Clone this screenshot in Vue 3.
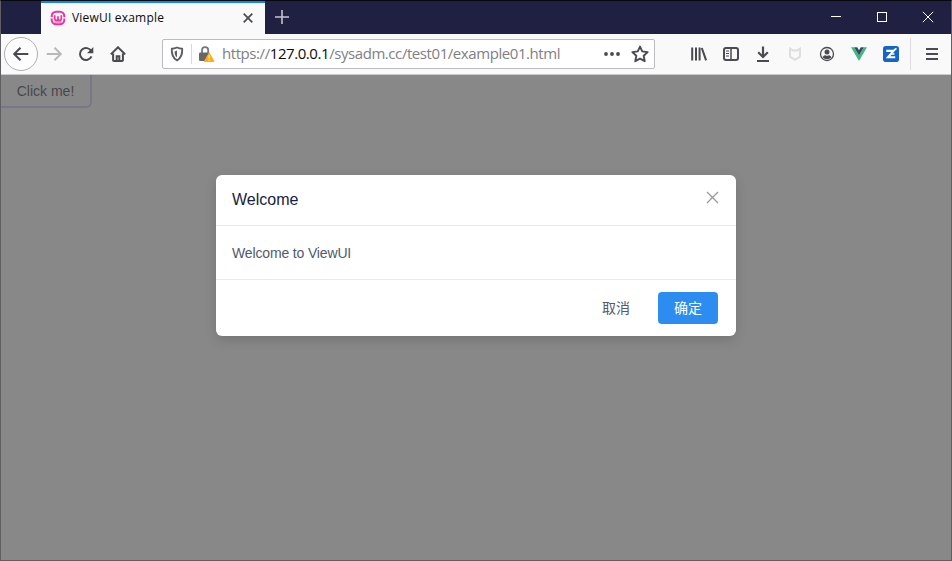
<script setup>
import { ref } from 'vue'

const open = ref(true)
const url = { scheme: 'https://', host: '127.0.0.1', path: '/sysadm.cc/test01/example01.html' }
</script>

<template>
  <div class="window">
    <header class="titlebar">
      <div class="tab">
        <svg class="favicon" viewBox="0 0 16 16">
          <rect x="1.7" y="1.7" width="12.6" height="12.6" rx="4.5" fill="none" stroke="#f0309c" stroke-width="2" />
          <path d="M0 7.8h3M13 7.8h3" stroke="#f9f9fa" stroke-width="1.2" />
          <path d="M4.7 5.2v3.4a1.65 1.9 0 0 0 3.3 0V6.2v2.4a1.65 1.9 0 0 0 3.3 0V5.2" fill="none" stroke="#f0309c" stroke-width="1.7" />
          <path d="M4.5 12h7" stroke="#f0309c" stroke-width="1" />
        </svg>
        <span class="tab-title">ViewUI example</span>
        <svg class="tab-close" viewBox="0 0 10 10"><path d="M.7.7l8.6 8.6M9.3.7L.7 9.3" stroke="#4a4a4f" stroke-width="1.7" /></svg>
      </div>
      <svg class="new-tab" viewBox="0 0 14 14"><path d="M7 0v14M0 7h14" stroke="#c4c4d0" stroke-width="1.6" /></svg>
      <div class="controls">
        <span class="control"><svg width="12" height="12"><path d="M1 5.5h10" stroke="#fff" /></svg></span>
        <span class="control"><svg width="12" height="12"><rect x="1.5" y="1.5" width="9" height="9" fill="none" stroke="#fff" /></svg></span>
        <span class="control"><svg width="12" height="12"><path d="M.8 .8l10.4 10.4M11.2 .8L.8 11.2" stroke="#fff" /></svg></span>
      </div>
    </header>

    <nav class="toolbar">
      <span class="back">
        <svg viewBox="0 0 16 16" class="line"><path d="M15.3 8H1.5M7.5 1.7L1.2 8l6.3 6.3" /></svg>
      </span>
      <span class="tool">
        <svg viewBox="0 0 16 16" class="line faded"><path d="M.7 8h13.8M8.5 1.7L14.8 8l-6.3 6.3" /></svg>
      </span>
      <span class="tool">
        <svg viewBox="0 0 16 16" class="line"><path d="M13.3 5.2A6 6 0 1 0 13.5 10.4" /><path d="M15.300 1v6.300H9z" fill="#4a4a4f" stroke="none" /></svg>
      </span>
      <span class="tool">
        <svg viewBox="0 0 16 16" class="line"><path d="M.8 8.4L8 1.3l7.2 7.1M3.1 7.6v6.6c0 .5.3.8.8.8h8.2c.5 0 .8-.3.8-.8V7.6" /><path d="M6.700 15v-4.800h2.600V15" /></svg>
      </span>

      <div class="urlbar">
        <svg class="shield" viewBox="0 0 16 16">
          <path d="M8 1.5c2 .9 3.800 1.200 5.200 1.200.3 5.200-.6 9.200-5.200 11.600C3.400 11.900 2.500 7.900 2.800 2.700 4.200 2.700 6 2.400 8 1.500z" fill="none" stroke="#5d5d62" stroke-width="1.900" stroke-linejoin="round" />
          <path d="M8 4.500v6.800c-1.700-1.200-2.400-3-2.400-5.900C6.500 5.200 7.300 4.900 8 4.500z" fill="#5d5d62" />
        </svg>
        <i class="divider"></i>
        <svg class="lock" viewBox="0 0 18 18">
          <path d="M5 8V5.200a3.100 3.100 0 0 1 6.200 0V8" fill="none" stroke="#77777b" stroke-width="1.800" />
          <rect x="2" y="7.500" width="10" height="8.500" rx="1.300" fill="#66666b" />
          <path d="M12.200 8.300L16.700 16.300H7.700z" fill="#ffae17" stroke="#ffae17" stroke-width="1.300" stroke-linejoin="round" />
          <path d="M12.200 10.300v3M12.200 14.500v1.200" stroke="#fff4d8" stroke-width="1.200" />
        </svg>
        <span class="address">{{ url.scheme }}<b>{{ url.host }}</b>{{ url.path }}</span>
        <svg class="dots" viewBox="0 0 16 16"><g fill="#4a4a4f"><circle cx="2" cy="8" r="1.900" /><circle cx="8" cy="8" r="1.900" /><circle cx="14" cy="8" r="1.900" /></g></svg>
        <svg class="star" viewBox="0 0 16 16"><path d="M8 1.400l2 4.300 4.800.6-3.500 3.300.9 4.800L8 12.100l-4.200 2.300.9-4.800L1.200 6.300 6 5.700z" fill="none" stroke="#4a4a4f" stroke-width="1.700" stroke-linejoin="round" /></svg>
      </div>

      <div class="extras">
        <span class="tool">
          <svg viewBox="0 0 16 16" class="line"><path d="M1.200 1.500v13M5 1.500v13M8.600 1.500v13M10.800 2l4.300 12.300" /></svg>
        </span>
        <span class="tool">
          <svg viewBox="0 0 16 16" class="line"><rect x="1" y="2" width="14" height="12" rx="2" /><path d="M8 2v12" stroke-width="1.500" /><path d="M3 5h3M3 7.500h3M3 10h3" stroke-width="1" /></svg>
        </span>
        <span class="tool">
          <svg viewBox="0 0 16 16" class="line"><path d="M8 .5v10.300M3.200 6.300L8 11l4.800-4.700M2 15h12" stroke-width="2.200" /></svg>
        </span>
        <span class="tool">
          <svg viewBox="0 0 16 16"><path d="M3 2.500l3 2h4l3-2v7.200c0 1-.5 1.500-1.500 2L8 13.800 4.500 11.700C3.500 11.200 3 10.700 3 9.700z" fill="none" stroke="#dededf" stroke-width="2" /></svg>
        </span>
        <span class="tool">
          <svg viewBox="0 0 16 16"><circle cx="8" cy="8" r="6.500" fill="none" stroke="#4a4a4f" stroke-width="1.300" /><circle cx="8" cy="6.100" r="2.500" fill="#4a4a4f" /><path d="M3.500 11.200C4.600 9.600 5.400 9.200 6.200 9.200c1.100.7 2.500.7 3.600 0 .8 0 1.600.4 2.700 2-2.300 2.500-6.700 2.500-9 0z" fill="#4a4a4f" /></svg>
        </span>
        <span class="tool">
          <svg viewBox="0 0 16 16"><path d="M0 1.200h3.200L8 9.500l4.800-8.300H16L8 15z" fill="#41b883" /><path d="M3.200 1.200h3L8 4.300l1.800-3.100h3L8 9.500z" fill="#35495e" /></svg>
        </span>
        <span class="tool">
          <svg viewBox="0 0 16 16"><rect width="16" height="16" rx="2.800" fill="#1565c9" /><path d="M3.300 4.900h7.200L5 11.200h7.200" fill="none" stroke="#fff" stroke-width="2.100" /><path d="M11 4l2.500-1.500M8 8h3.500" stroke="#fff" stroke-width="1.500" /></svg>
        </span>
      </div>
      <i class="toolbar-divider"></i>
      <span class="tool menu">
        <svg viewBox="0 0 16 16" class="line"><path d="M2 3h12M2 8h12M2 13h12" /></svg>
      </span>
    </nav>

    <main class="page">
      <button class="trigger" @click="open = true">Click me!</button>
      <div v-if="open" class="mask">
        <section class="modal">
          <header class="modal-header">
            <span>Welcome</span>
            <svg class="modal-close" viewBox="0 0 13 13" @click="open = false"><path d="M1 1l11 11M12 1L1 12" stroke="#999" stroke-width="1.300" /></svg>
          </header>
          <div class="modal-body">Welcome to ViewUI</div>
          <footer class="modal-footer">
            <button class="btn text" @click="open = false">取消</button>
            <button class="btn primary" @click="open = false">确定</button>
          </footer>
        </section>
      </div>
    </main>
  </div>
</template>

<style>
body {
  margin: 0;
  overflow: hidden;
}
</style>

<style scoped>
* {
  box-sizing: border-box;
}
svg {
  display: block;
  flex: none;
}
.window {
  display: flex;
  flex-direction: column;
  width: 952px;
  height: 561px;
  border: 1px solid #5f5f62;
  border-top-color: #08080f;
  background: #f9f9fa;
}
.titlebar {
  display: flex;
  align-items: center;
  flex: none;
  height: 33px;
  padding-left: 40px;
  background: #202042;
}
.tab {
  display: flex;
  align-items: center;
  width: 224px;
  height: 33px;
  padding: 0 12px 1px 9px;
  border-top: 2px solid #0a84ff;
  background: #f9f9fa;
}
.favicon {
  width: 16px;
  height: 16px;
}
.tab-title {
  margin-left: 6px;
  color: #0c0c0d;
  font: 12px/16px "Open Sans", "Noto Sans", sans-serif;
  letter-spacing: 0.2px;
  white-space: nowrap;
}
.tab-close {
  width: 10px;
  height: 10px;
  margin-left: auto;
}
.new-tab {
  width: 14px;
  height: 14px;
  margin: 0 0 1px 10px;
}
.controls {
  display: flex;
  margin-left: auto;
}
.control {
  display: flex;
  align-items: center;
  justify-content: center;
  width: 46px;
  height: 33px;
  padding-bottom: 1px;
}
.toolbar {
  display: flex;
  align-items: center;
  flex: none;
  height: 41px;
  padding: 0 3px;
  border-bottom: 1px solid #cacacc;
}
.back {
  display: flex;
  align-items: center;
  justify-content: center;
  width: 34px;
  height: 34px;
  border: 1px solid #b0b0b3;
  border-radius: 50%;
  background: #fdfdfd;
}
.tool {
  display: flex;
  align-items: center;
  justify-content: center;
  width: 32px;
  height: 32px;
}
.back svg,
.tool svg {
  width: 16px;
  height: 16px;
}
.line {
  fill: none;
  stroke: #4a4a4f;
  stroke-width: 2;
}
.faded {
  stroke: #b9b9bb;
}
.urlbar {
  display: flex;
  align-items: center;
  width: 493px;
  height: 30px;
  margin-left: 28px;
  padding: 0 5px 0 6px;
  border: 1px solid #bcbcc0;
  border-radius: 2px;
  background: #fff;
}
.shield {
  width: 16px;
  height: 16px;
}
.divider {
  width: 1px;
  height: 20px;
  margin: 0 5px 0 6px;
  background: #d9d9db;
}
.lock {
  width: 18px;
  height: 18px;
}
.address {
  margin-left: 7px;
  padding-bottom: 2px;
  color: #808083;
  font: 15px/22px "Open Sans", "Noto Sans", sans-serif;
  letter-spacing: -0.43px;
  white-space: nowrap;
}
.address b {
  color: #0c0c0d;
  font-weight: 400;
}
.dots {
  width: 16px;
  height: 16px;
  margin-left: auto;
}
.star {
  width: 18px;
  height: 18px;
  margin-left: 11px;
}
.extras {
  display: flex;
  margin-left: 28px;
}
.toolbar-divider {
  width: 1px;
  height: 32px;
  margin-left: 3px;
  background: #dedee0;
}
.menu {
  margin-left: 5px;
}
.page {
  position: relative;
  flex: 1;
  overflow: hidden;
  background: #f3f3f3;
  font-family: "Liberation Sans", "Noto Sans CJK SC", sans-serif;
}
.trigger {
  display: block;
  width: 89px;
  height: 31px;
  padding: 2px 0 0;
  border: 0;
  border-radius: 0 0 4px;
  background: #f3f3f3;
  box-shadow: 0 0 0 2px rgba(80, 80, 210, 0.22);
  color: #5c606c;
  font: 14px/29px "Liberation Sans", sans-serif;
}
.mask {
  position: absolute;
  inset: 0;
  overflow: hidden;
  padding-top: 100px;
  background: rgba(55, 55, 55, 0.57);
}
.modal {
  width: 520px;
  height: 161px;
  margin: 0 auto;
  border-radius: 6px;
  background: #fff;
  box-shadow: 0 4px 12px rgba(0, 0, 0, 0.15);
}
.modal-header {
  display: flex;
  justify-content: space-between;
  height: 51px;
  padding: 14px 17px 0 16px;
  border-bottom: 1px solid #e8eaec;
  color: #17233d;
  font-size: 16px;
  line-height: 21px;
}
.modal-close {
  width: 13px;
  height: 13px;
  margin-top: 2px;
}
.modal-body {
  height: 53px;
  padding: 17px 16px 15px;
  color: #515a6e;
  font-size: 14px;
  line-height: 21px;
  letter-spacing: -0.15px;
}
.modal-footer {
  display: flex;
  justify-content: flex-end;
  gap: 12px;
  height: 57px;
  padding: 12px 18px;
  border-top: 1px solid #e8eaec;
}
.btn {
  width: 60px;
  height: 32px;
  padding: 0 0 2px;
  border: 0;
  border-radius: 4px;
  font: 14px/30px "Noto Sans CJK SC", sans-serif;
}
.text {
  background: transparent;
  color: #515a6e;
}
.primary {
  background: #2d8cf0;
  color: #fff;
}
</style>
